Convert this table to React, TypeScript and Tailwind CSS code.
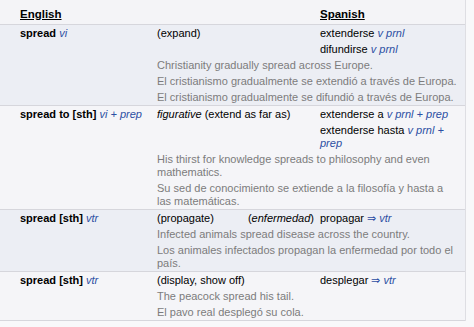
const POS = ({ children }: { children: React.ReactNode }) => (
  <i className="text-[#2c4fa3]">{children}</i>
)

type Entry = {
  term: React.ReactNode
  sense: React.ReactNode
  senseRight?: React.ReactNode
  translations: React.ReactNode[]
  examples: string[]
  shaded: boolean
}

const entries: Entry[] = [
  {
    term: (
      <>
        <b>spread</b> <POS>vi</POS>
      </>
    ),
    sense: '(expand)',
    translations: [
      <>
        extenderse <POS>v prnl</POS>
      </>,
      <>
        difundirse <POS>v prnl</POS>
      </>,
    ],
    examples: [
      'Christianity gradually spread across Europe.',
      'El cristianismo gradualmente se extendió a través de Europa.',
      'El cristianismo gradualmente se difundió a través de Europa.',
    ],
    shaded: true,
  },
  {
    term: (
      <>
        <b>spread to [sth]</b> <POS>vi + prep</POS>
      </>
    ),
    sense: (
      <>
        <i>figurative</i> (extend as far as)
      </>
    ),
    translations: [
      <>
        extenderse a <POS>v prnl + prep</POS>
      </>,
      <>
        extenderse hasta <POS>v prnl + prep</POS>
      </>,
    ],
    examples: [
      'His thirst for knowledge spreads to philosophy and even mathematics.',
      'Su sed de conocimiento se extiende a la filosofía y hasta a las matemáticas.',
    ],
    shaded: false,
  },
  {
    term: (
      <>
        <b>spread [sth]</b> <POS>vtr</POS>
      </>
    ),
    sense: '(propagate)',
    senseRight: (
      <>
        (<i>enfermedad</i>)
      </>
    ),
    translations: [
      <>
        propagar <span className="text-[#2c4fa3]">⇒</span> <POS>vtr</POS>
      </>,
    ],
    examples: [
      'Infected animals spread disease across the country.',
      'Los animales infectados propagan la enfermedad por todo el país.',
    ],
    shaded: true,
  },
  {
    term: (
      <>
        <b>spread [sth]</b> <POS>vtr</POS>
      </>
    ),
    sense: '(display, show off)',
    translations: [
      <>
        desplegar <span className="text-[#2c4fa3]">⇒</span> <POS>vtr</POS>
      </>,
    ],
    examples: ['The peacock spread his tail.', 'El pavo real desplegó su cola.'],
    shaded: false,
  },
]

export default function App() {
  return (
    <div
      className="min-h-screen w-[474px] bg-[#f8f8fa] text-black"
      style={{ fontFamily: '"Liberation Sans", Arial, sans-serif' }}
    >
      <div className="w-[466px] border-r border-[#dedee3]">
        {/* Header */}
        <div className="grid h-[25px] grid-cols-[137px_163px_1fr] items-center border-b border-[#d6d6dc] bg-[#f4f4f7] pl-[20px] pt-[5px] text-[11.5px] font-bold leading-none">
          <span className="underline">English</span>
          <span />
          <span className="underline">Spanish</span>
        </div>

        {entries.map((entry, i) => (
          <div
            key={i}
            className={`border-b border-[#d6d6dc] text-[11px] leading-[13px] ${
              entry.shaded ? 'bg-[#eceef4]' : 'bg-[#f5f5f8]'
            }`}
          >
            {entry.translations.map((tr, j) => (
              <div key={j} className="grid grid-cols-[137px_163px_1fr] py-[1.5px] pl-[20px] pr-[6px]">
                <div>{j === 0 ? entry.term : null}</div>
                <div className="flex justify-between pr-[6px]">
                  <span>{j === 0 ? entry.sense : null}</span>
                  {j === 0 && entry.senseRight ? <span>{entry.senseRight}</span> : null}
                </div>
                <div>{tr}</div>
              </div>
            ))}
            {entry.examples.map((ex, j) => (
              <div key={j} className="py-[1.5px] pl-[157px] pr-[6px] text-[#7c7c7c]">
                {ex}
              </div>
            ))}
          </div>
        ))}
      </div>
    </div>
  )
}
